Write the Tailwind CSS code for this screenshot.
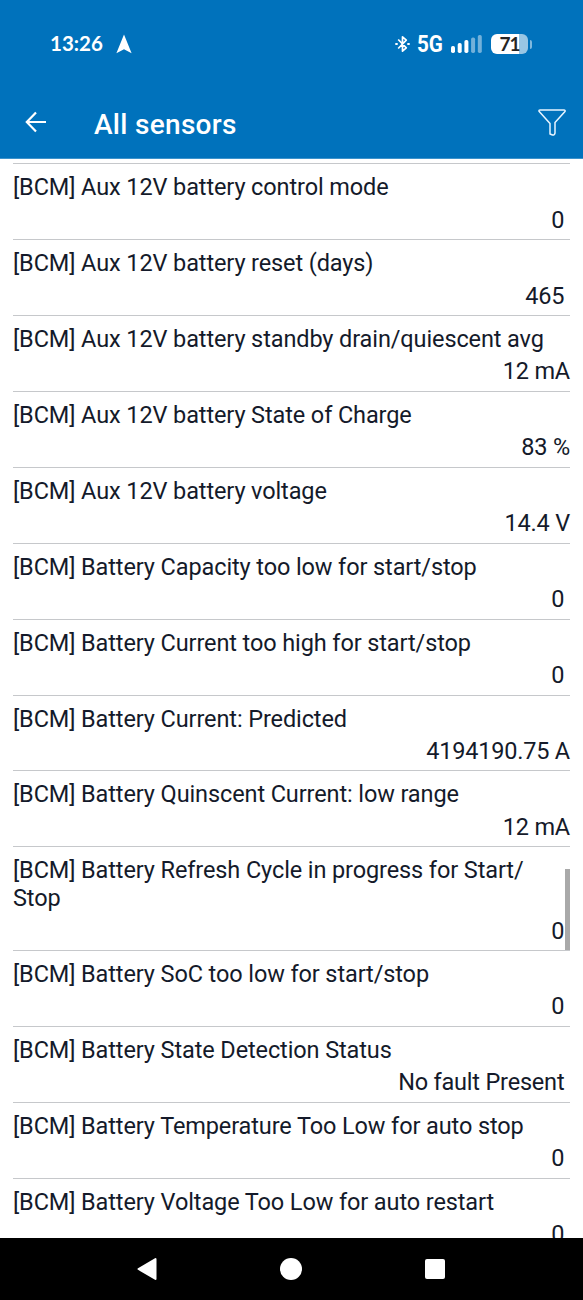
<!DOCTYPE html>
<html lang="en">
<head>
<meta charset="utf-8">
<title>All sensors</title>
<script src="https://cdn.jsdelivr.net/npm/@tailwindcss/browser@4"></script>
</head>
<body class="w-[583px] h-[1300px] overflow-hidden bg-white font-[Roboto,sans-serif] text-[#141a2a] flex flex-col">
<header class="h-[159px] shrink-0 bg-[#0072bc] text-white border-b border-[#3c93cc] flex flex-col">
  <div class="h-[88px] flex items-center pl-[50px] pr-[52px]">
    <span class="text-[20.500px] leading-6 -mt-[2px] font-bold font-[Lato,sans-serif] w-[54px] whitespace-nowrap">13:26</span>
    <svg class="ml-[12px]" width="16" height="20" viewBox="0 0 16 20"><path d="M8 .5 15.6 19.3 8 15.2.4 19.3Z" fill="#fff"/></svg>
    <svg class="ml-auto" width="15" height="18" viewBox="0 0 15 18" fill="none" stroke="#fff" stroke-width="1.7"><path d="M3.2 4.5 11.3 12.8 7.5 16.2V1.8L11.3 5.2 3.2 13.5" stroke-linejoin="round"/><path d="M.3 9H2.7M12.3 9H14.7" stroke-width="2"/></svg>
    <span class="ml-[7px] w-[26px] text-[24px] leading-6 font-bold whitespace-nowrap"><span class="inline-block origin-left scale-x-[.86]">5G</span></span>
    <svg class="ml-[8px]" width="32" height="18" viewBox="0 0 32 18" fill="#fff"><rect x="0" y="11" width="4" height="7" rx="1.7"/><rect x="6.7" y="8" width="4" height="10" rx="1.7"/><rect x="13.4" y="5" width="4" height="13" rx="1.7"/><g opacity=".45"><rect x="20.1" y="2.500" width="4" height="15.500" rx="1.7"/><rect x="26.800" y="0" width="4" height="18" rx="1.7"/></g></svg>
    <span class="ml-[8px] -mt-[1px] w-[37px] h-[20px] rounded-[6px] bg-linear-to-r from-white from-75% to-[#98c6e4] to-75% text-[#252525] text-[19px] leading-[19px] font-bold text-center font-[Lato,sans-serif] tracking-[-1px]">71</span>
    <span class="ml-[2px] w-[2px] h-[9px] rounded-r bg-[#80b9de] -mr-[1px]"></span>
  </div>
  <div class="h-[70px] flex items-center pl-[25px] pr-[17px]">
    <svg width="22" height="22" viewBox="0 0 22 22" class="-mt-[2px]" fill="none" stroke="#fff" stroke-width="2.200"><path d="M21 11H2M11 1.500 1.800 11 11 20.500"/></svg>
    <h1 class="ml-[47px] mt-[3px] text-[28px] leading-8 font-medium tracking-[.3px]">All sensors</h1>
    <svg class="ml-auto" width="28" height="28" viewBox="0 0 28 28" fill="none" stroke="#e8f5ff" stroke-width="1.500" stroke-linejoin="round"><path d="M1 2.200Q.8 1 2 1H26Q27.500 1 27 2.400L17 13.500V24Q16.500 26.500 14.500 26L12 25V14.500Z"/></svg>
  </div>
</header>
<main class="relative h-[1079px] shrink-0 overflow-hidden pl-[13px] pr-[13px] pt-[4.400px] text-[23.500px] tracking-[-0.11px] leading-[28px]">
  <ul class="border-t border-[#c6c8cb] [&>li]:min-h-[75.880px] [&>li]:pt-[9px] [&>li]:pb-[5.500px] [&>li]:border-b [&>li]:border-[#c6c8cb] [&_p+p]:mt-[4.300px] [&_p+p]:text-right [&_p+p]:whitespace-pre [&_p+p]:tracking-[-0.200px]">
    <li><p>[BCM] Aux 12V battery control mode</p><p>0 </p></li>
    <li><p>[BCM] Aux 12V battery reset (days)</p><p>465 </p></li>
    <li><p>[BCM] Aux 12V battery standby drain/quiescent avg</p><p>12 mA</p></li>
    <li><p>[BCM] Aux 12V battery State of Charge</p><p>83 %</p></li>
    <li><p>[BCM] Aux 12V battery voltage</p><p>14.4 V</p></li>
    <li><p>[BCM] Battery Capacity too low for start/stop</p><p>0 </p></li>
    <li><p>[BCM] Battery Current too high for start/stop</p><p>0 </p></li>
    <li><p>[BCM] Battery Current: Predicted</p><p>4194190.75 A</p></li>
    <li><p>[BCM] Battery Quinscent Current: low range</p><p>12 mA</p></li>
    <li><p>[BCM] Battery Refresh Cycle in progress for Start/<br>Stop</p><p>0 </p></li>
    <li><p>[BCM] Battery SoC too low for start/stop</p><p>0 </p></li>
    <li><p>[BCM] Battery State Detection Status</p><p>No fault Present </p></li>
    <li><p>[BCM] Battery Temperature Too Low for auto stop</p><p>0 </p></li>
    <li><p>[BCM] Battery Voltage Too Low for auto restart</p><p>0 </p></li>
  </ul>
  <div class="absolute left-[565px] top-[710px] w-[5px] h-[81px] bg-[#a9a9a9]"></div>
</main>
<nav class="h-[62px] shrink-0 bg-black flex items-center pl-[137px]">
  <svg width="20" height="24" viewBox="0 0 20 24"><path d="M1.500 12 18.500 2V22Z" fill="#fff" stroke="#fff" stroke-width="2" stroke-linejoin="round"/></svg>
  <span class="ml-[123px] w-[22px] h-[22px] rounded-full bg-white"></span>
  <span class="ml-[123px] w-[20px] h-[20px] rounded-[2px] bg-white"></span>
</nav>
</body>
</html>
